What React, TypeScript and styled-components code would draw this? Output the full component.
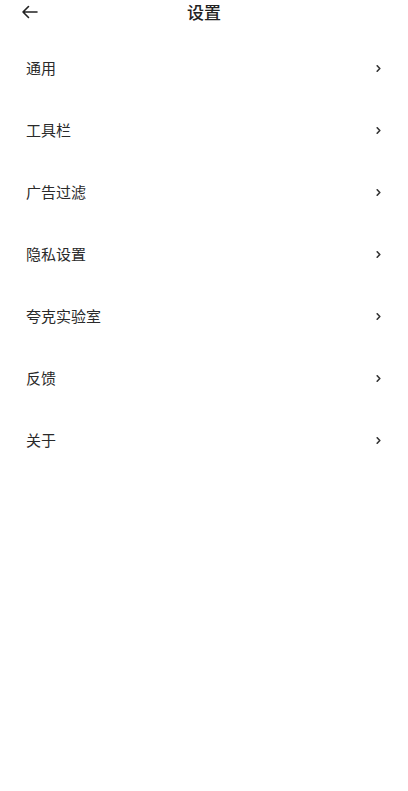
import styled, { createGlobalStyle } from "styled-components";

const GlobalStyle = createGlobalStyle`
  html, body {
    margin: 0;
    padding: 0;
    background: #ffffff;
    font-family: "Noto Sans CJK SC", "Noto Sans", sans-serif;
  }
`;

const Page = styled.div`
  width: 408px;
  min-height: 791px;
  background: #ffffff;
`;

const Header = styled.div`
  position: relative;
  height: 24px;
  display: flex;
  align-items: center;
  justify-content: center;
`;

const BackButton = styled.button`
  position: absolute;
  left: 19px;
  top: 2px;
  width: 20px;
  height: 20px;
  padding: 0;
  border: none;
  background: none;
  display: flex;
  align-items: center;
  justify-content: center;
  color: #222;
`;

const Title = styled.h1`
  margin: 0;
  font-size: 17px;
  font-weight: 500;
  color: #222;
  line-height: 24px;
`;

const List = styled.ul`
  list-style: none;
  margin: 13px 0 0;
  padding: 0;
`;

const Row = styled.li`
  height: 62px;
  display: flex;
  align-items: center;
  justify-content: space-between;
  padding: 0 26px;
`;

const Label = styled.span`
  font-size: 15px;
  color: #2a2a2a;
  line-height: 20px;
`;

const Chevron = styled.svg`
  width: 5px;
  height: 7px;
  margin-right: 1px;
`;

const items = ["通用", "工具栏", "广告过滤", "隐私设置", "夸克实验室", "反馈", "关于"];

export default function App() {
  return (
    <Page>
      <GlobalStyle />
      <Header>
        <BackButton aria-label="返回">
          <svg width="17" height="14" viewBox="0 0 17 14" fill="none">
            <path d="M16 7H2M7.5 1.5L2 7l5.5 5.5" stroke="#222" strokeWidth="1.6" strokeLinecap="round" strokeLinejoin="round" />
          </svg>
        </BackButton>
        <Title>设置</Title>
      </Header>
      <List>
        {items.map((item) => (
          <Row key={item}>
            <Label>{item}</Label>
            <Chevron viewBox="0 0 5 7">
              <path d="M1.2 0.8l2.6 2.7-2.6 2.7" stroke="#333" strokeWidth="1.6" fill="none" strokeLinecap="round" strokeLinejoin="round" />
            </Chevron>
          </Row>
        ))}
      </List>
    </Page>
  );
}
